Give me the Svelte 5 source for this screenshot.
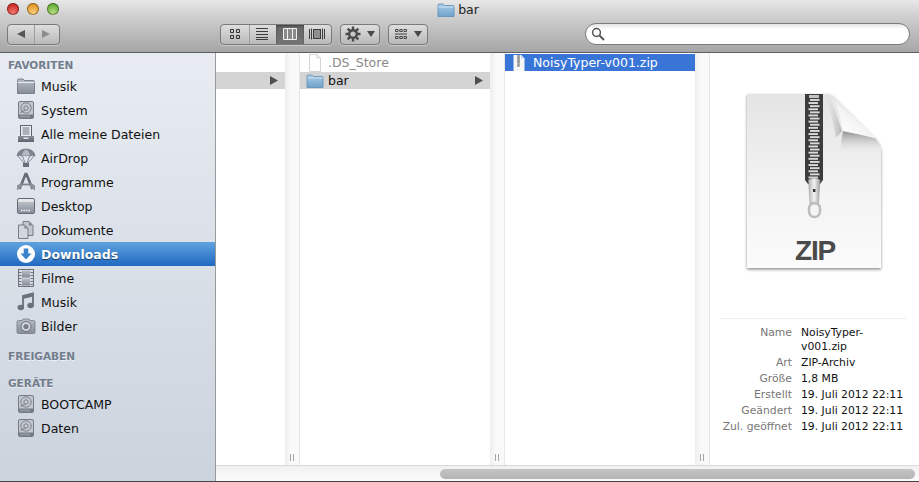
<script>
	const favorites = [
		{ label: 'Musik', icon: 'folder' },
		{ label: 'System', icon: 'disk' },
		{ label: 'Alle meine Dateien', icon: 'allfiles' },
		{ label: 'AirDrop', icon: 'airdrop' },
		{ label: 'Programme', icon: 'apps' },
		{ label: 'Desktop', icon: 'desktop' },
		{ label: 'Dokumente', icon: 'docs' },
		{ label: 'Downloads', icon: 'download', active: true },
		{ label: 'Filme', icon: 'film' },
		{ label: 'Musik', icon: 'note' },
		{ label: 'Bilder', icon: 'camera' }
	];
	const devices = [
		{ label: 'BOOTCAMP', icon: 'disk' },
		{ label: 'Daten', icon: 'disk' }
	];
	const info = [
		['Art', 'ZIP-Archiv'],
		['Größe', '1,8 MB'],
		['Erstellt', '19. Juli 2012 22:11'],
		['Geändert', '19. Juli 2012 22:11'],
		['Zul. geöffnet', '19. Juli 2012 22:11']
	];
	// teeth of the big zipper
	const teeth = Array.from({ length: 26 }, (_, i) => i);
</script>

{#snippet sideIcon(name)}
	<svg class="side-icon" width="20" height="20" viewBox="0 0 20 20">
		{#if name === 'folder'}
			<path d="M1.500 4.500 Q1.500 3 3 3 H7 L8.500 4.500 H17 Q18.500 4.500 18.500 6 V17.500 H1.500 Z" fill="url(#sideGray)" stroke="#67707c" stroke-width=".8" />
			<path d="M1.500 6.500 H18.500" stroke="#e6e9ee" stroke-width="1" />
		{:else if name === 'disk'}
			<rect x="2.500" y="1.500" width="15" height="17" rx="1.500" fill="#c3c8cf" stroke="#757c86" />
			<circle cx="10" cy="8" r="5.200" fill="none" stroke="#7f858e" />
			<circle cx="10" cy="8" r="2.200" fill="none" stroke="#7f858e" />
			<path d="M9 10 L4.500 12.500" stroke="#6b717a" />
			<rect x="3" y="14.500" width="14" height="3.500" fill="#747a84" />
			<path d="M5 15.500 V17.500 M7 15.500 V17.500 M9 15.500 V17.500 M11 15.500 V17.500 M13 15.500 V17.500" stroke="#c9cdd3" stroke-width=".7" />
		{:else if name === 'allfiles'}
			<rect x="4.500" y="1.500" width="11" height="11" fill="#eceef1" stroke="#5e6570" />
			<path d="M6.500 4 H13.500 M6.500 6 H13.500 M6.500 8 H13.500 M6.500 10 H13.500" stroke="#6d747f" />
			<path d="M2 12 H18 V18 H2 Z" fill="url(#sideDark)" />
			<rect x="7.500" y="13.500" width="5" height="1.500" fill="#dfe2e6" />
		{:else if name === 'airdrop'}
			<path d="M1 8 Q2 1 10 1 Q18 1 19 8 Q16.500 6.500 14 8 Q12 6.500 10 8 Q8 6.500 6 8 Q3.500 6.500 1 8 Z" fill="#7d848f" stroke="#6a717c" stroke-width=".7" />
			<path d="M6 7.500 Q6.500 3 10 1.500 Q13.500 3 14 7.500" fill="#b4bac3" />
			<path d="M2 8 L8 15 M18 8 L12 15 M6.500 8 L9 15 M13.500 8 L11 15" stroke="#6a717c" stroke-width=".8" />
			<rect x="7" y="15" width="6" height="4" fill="#666d78" />
		{:else if name === 'apps'}
			<path d="M10 1 L3.500 17 M10 1 L16.500 17" stroke="#646b76" stroke-width="2.600" fill="none" />
			<path d="M1 13.500 L6 10.500 V15 L1 18.500 Z M19 13.500 L14 10.500 V15 L19 18.500 Z" fill="#8d939d" />
			<path d="M5 12.500 H15" stroke="#7c838d" stroke-width="1.800" />
		{:else if name === 'desktop'}
			<rect x="1.500" y="2.500" width="17" height="15" rx="1.500" fill="#e3e5e9" stroke="#636a75" />
			<path d="M2 6 H18 V17 H2 Z" fill="url(#sideGray)" />
			<path d="M5 14.500 H15" stroke="#f4f5f7" stroke-width="1.500" stroke-dasharray="1.500 1" />
		{:else if name === 'docs'}
			<path d="M7 1.500 H13 L17 5.500 V15.500 H7 Z" fill="#c4c8ce" stroke="#6b727d" stroke-width=".9" />
			<path d="M13 1.500 V5.500 H17 Z" fill="#7f858f" />
			<path d="M2.500 5 H8.500 L12 8.500 V18.500 H2.500 Z" fill="#d3d7dc" stroke="#6b727d" stroke-width=".9" />
			<path d="M8.500 5 V8.500 H12 Z" fill="#7f858f" />
		{:else if name === 'download'}
			<circle cx="10" cy="10" r="9" fill="#fff" />
			<path d="M7.700 4.500 H12.300 V9.500 H15.500 L10 15.500 L4.500 9.500 H7.700 Z" fill="#3a83cd" />
		{:else if name === 'film'}
			<rect x="2.500" y="1.500" width="15" height="17" fill="#d9dce1" stroke="#6c737e" />
			<rect x="6" y="2.500" width="8" height="7" fill="url(#sideGray)" />
			<rect x="6" y="10.500" width="8" height="7" fill="url(#sideGray)" />
			<path d="M3 4.500 H5.500 M3 7.500 H5.500 M3 10.500 H5.500 M3 13.500 H5.500 M3 16.500 H5.500 M14.500 4.500 H17 M14.500 7.500 H17 M14.500 10.500 H17 M14.500 13.500 H17 M14.500 16.500 H17" stroke="#6c737e" />
		{:else if name === 'note'}
			<path d="M7 15 V4 L17 1.500 V13" fill="none" stroke="#6a717c" stroke-width="1.800" />
			<path d="M7 4 L17 1.500 V4.500 L7 7 Z" fill="#6a717c" />
			<ellipse cx="4.800" cy="15.500" rx="3.300" ry="2.700" fill="#6a717c" />
			<ellipse cx="14.600" cy="13.500" rx="3.300" ry="2.700" fill="#6a717c" />
		{:else if name === 'camera'}
			<path d="M1 6 Q1 4.500 2.500 4.500 H6 L7 3 H13 L14 4.500 H17.500 Q19 4.500 19 6 V16 Q19 17.500 17.500 17.500 H2.500 Q1 17.500 1 16 Z" fill="url(#sideGray)" stroke="#6a717c" stroke-width=".7" />
			<circle cx="10" cy="10.500" r="5" fill="#d3d7dc" stroke="#666d78" />
			<circle cx="10" cy="10.500" r="2.600" fill="#767d88" />
		{/if}
	</svg>
{/snippet}

{#snippet tinyFolder()}
	<svg class="row-icon" width="18" height="16" viewBox="0 0 18 16">
		<path d="M1 3 Q1 2 2 2 H6 L7.500 3.500 H16 Q17 3.500 17 4.500 V14.500 H1 Z" fill="url(#blueFolder)" stroke="#5f8db5" stroke-width=".8" />
		<path d="M1.500 5 H16.500" stroke="#cfe2f1" />
	</svg>
{/snippet}

<svg class="defs" width="0" height="0">
	<defs>
		<linearGradient id="sideGray" x1="0" y1="0" x2="0" y2="1"><stop offset="0" stop-color="#b9bfc8" /><stop offset="1" stop-color="#868d98" /></linearGradient>
		<linearGradient id="sideDark" x1="0" y1="0" x2="0" y2="1"><stop offset="0" stop-color="#8a909a" /><stop offset="1" stop-color="#5c636e" /></linearGradient>
		<linearGradient id="blueFolder" x1="0" y1="0" x2="0" y2="1"><stop offset="0" stop-color="#a9cbe6" /><stop offset="1" stop-color="#6fa3cd" /></linearGradient>
		<linearGradient id="sheet" x1="0" y1="0" x2="0" y2="1"><stop offset="0" stop-color="#e4e4e4" /><stop offset=".55" stop-color="#f3f3f3" /><stop offset="1" stop-color="#fbfbfb" /></linearGradient>
		<linearGradient id="curl" x1=".2" y1=".95" x2=".75" y2=".25"><stop offset="0" stop-color="#ffffff" /><stop offset=".55" stop-color="#f4f4f4" /><stop offset="1" stop-color="#bdbdbd" /></linearGradient>
		<linearGradient id="curlShade" x1="0" y1="0" x2="0" y2="1"><stop offset="0" stop-color="#8e8e8e" /><stop offset="1" stop-color="#ededed" stop-opacity="0" /></linearGradient>
		<linearGradient id="foldShade" x1="0" y1="0" x2="1" y2="0"><stop offset="0" stop-color="#e4e4e4" stop-opacity="0" /><stop offset="1" stop-color="#b4b4b4" /></linearGradient>
		<linearGradient id="slider" x1="0" y1="0" x2="1" y2="0"><stop offset="0" stop-color="#b4b4b4" /><stop offset=".5" stop-color="#f2f2f2" /><stop offset="1" stop-color="#a0a0a0" /></linearGradient>
	</defs>
</svg>

<div class="window">
	<header class="toolbar">
		<div class="titlebar">
			<div class="lights">
				<span class="light red"></span>
				<span class="light amber"></span>
				<span class="light green"></span>
			</div>
			<div class="title">
				{@render tinyFolder()}
				<span>bar</span>
			</div>
		</div>
		<div class="tools">
			<div class="btn nav">
				<span class="nav-half divided"><svg width="10" height="10" viewBox="0 0 10 10"><path d="M9 1 V9 L1 5 Z" fill="#565656" /></svg></span>
				<span class="nav-half"><svg width="10" height="10" viewBox="0 0 10 10"><path d="M1 1 V9 L9 5 Z" fill="#8c8c8c" /></svg></span>
			</div>
			<div class="btn views">
				<span class="view divided">
					<svg width="14" height="12" viewBox="0 0 14 12"><path d="M2.500 1.500 H5.500 V4.500 H2.500 Z M8.500 1.500 H11.500 V4.500 H8.500 Z M2.500 7.500 H5.500 V10.500 H2.500 Z M8.500 7.500 H11.500 V10.500 H8.500 Z" fill="none" stroke="#333" /></svg>
				</span>
				<span class="view">
					<svg width="14" height="12" viewBox="0 0 14 12"><path d="M1 .5 H13 M1 3.500 H13 M1 6.500 H13 M1 9.500 H13 M1 11.500 H13" stroke="#3c3c3c" /></svg>
				</span>
				<span class="view on">
					<svg width="14" height="12" viewBox="0 0 14 12"><path d="M.5 .5 H13.500 V11.500 H.5 Z M4.500 .5 V11.500 M9.500 .5 V11.500" fill="#8a8a8a" stroke="#f0f0f0" /></svg>
				</span>
				<span class="view">
					<svg width="16" height="12" viewBox="0 0 16 12"><path d="M.5 1 V11 M2.500 .5 V11.500 M13.500 .5 V11.500 M15.500 1 V11" stroke="#3c3c3c" /><rect x="4.500" y="1.500" width="7" height="9" fill="#8f8f8f" stroke="#3c3c3c" /></svg>
				</span>
			</div>
			<div class="btn menu gear">
				<svg width="16" height="16" viewBox="0 0 16 16">
					<circle cx="8" cy="8" r="5" fill="#4a4a4a" />
					<path d="M8 .5 V15.500 M.5 8 H15.500 M2.700 2.700 L13.300 13.300 M13.300 2.700 L2.700 13.300" stroke="#4a4a4a" stroke-width="2.400" />
					<circle cx="8" cy="8" r="2.600" fill="#c8c8c8" />
				</svg>
				<svg width="8" height="6" viewBox="0 0 8 6"><path d="M0 0 H8 L4 6 Z" fill="#4a4a4a" /></svg>
			</div>
			<div class="btn menu arrange">
				<svg width="14" height="12" viewBox="0 0 14 12">
					<path d="M1.500 1.500 H4 V3.500 H1.500 Z M5.750 1.500 H8.250 V3.500 H5.750 Z M10 1.500 H12.500 V3.500 H10 Z M1.500 8.500 H4 V10.500 H1.500 Z M5.750 8.500 H8.250 V10.500 H5.750 Z M10 8.500 H12.500 V10.500 H10 Z" fill="none" stroke="#3c3c3c" stroke-width=".9" />
					<path d="M1 6 H13" stroke="#3c3c3c" />
				</svg>
				<svg width="8" height="6" viewBox="0 0 8 6"><path d="M0 0 H8 L4 6 Z" fill="#4a4a4a" /></svg>
			</div>
			<div class="search">
				<svg width="14" height="14" viewBox="0 0 14 14"><circle cx="5.500" cy="5.500" r="3.900" fill="#fff" stroke="#555" stroke-width="1.500" /><path d="M8.500 8.500 L13 13" stroke="#555" stroke-width="2" /></svg>
			</div>
		</div>
	</header>

	<div class="body">
		<aside class="sidebar">
			<h2 class="first">FAVORITEN</h2>
			{#each favorites as item}
				<div class="side-row" class:active={item.active}>
					{@render sideIcon(item.icon)}
					<span>{item.label}</span>
				</div>
			{/each}
			<h2 class="shared">FREIGABEN</h2>
			<h2 class="devices">GERÄTE</h2>
			{#each devices as item}
				<div class="side-row">
					{@render sideIcon(item.icon)}
					<span>{item.label}</span>
				</div>
			{/each}
		</aside>

		<main class="browser">
			<div class="columns">
				<section class="col narrow">
					<div class="row gap"></div>
					<div class="row open"><svg class="arrow" width="8" height="9" viewBox="0 0 8 9"><path d="M0 0 L8 4.500 L0 9 Z" fill="#4f4f4f" /></svg></div>
				</section>
				<div class="grip"><i></i></div>
				<section class="col">
					<div class="row dim">
						<svg class="row-icon" width="18" height="18" viewBox="0 0 18 18"><path d="M3.500 .5 H11 L14.500 4 V17.500 H3.500 Z" fill="#fff" stroke="#d4d4d4" /><path d="M11 .5 V4 H14.500" fill="#efefef" stroke="#d4d4d4" /></svg>
						<span>.DS_Store</span>
					</div>
					<div class="row open">
						{@render tinyFolder()}
						<span>bar</span>
						<svg class="arrow" width="8" height="9" viewBox="0 0 8 9"><path d="M0 0 L8 4.500 L0 9 Z" fill="#4f4f4f" /></svg>
					</div>
				</section>
				<div class="grip"><i></i></div>
				<section class="col">
					<div class="row picked">
						<svg class="row-icon" width="18" height="18" viewBox="0 0 18 18"><path d="M2.500 1 H10 L13.500 4.500 V17 H2.500 Z" fill="#f6f6f6" /><path d="M10 1 V4.500 H13.500 Z" fill="#c9d6ec" /><path d="M6.500 1 H8.500 V9.500 H6.500 Z" fill="#555" /><path d="M7 2 H8 M7 4 H8 M7 6 H8 M7 8 H8" stroke="#ddd" /><rect x="6.200" y="9.500" width="2.600" height="3.500" rx="1" fill="#9a9a9a" /></svg>
						<span>NoisyTyper-v001.zip</span>
					</div>
				</section>
				<div class="grip"><i></i></div>
				<section class="preview">
					<svg class="zip" width="140" height="182" viewBox="0 0 140 182">
						<defs>
							<filter id="drop" x="-10%" y="-10%" width="120%" height="120%"><feDropShadow dx="0" dy="1.500" stdDeviation="1.500" flood-color="#000" flood-opacity=".45" /></filter>
						</defs>
						<path d="M3 2 H82 Q86 2 89 4 L131 46 Q137 52 137 60 V176 H3 Z" fill="url(#sheet)" filter="url(#drop)" />
						<path d="M80 2.500 H84 Q92 20 98 39 L92 46 Q88 22 80 2.500 Z" fill="url(#foldShade)" />
						<path d="M99 39 Q115 42 131 46 Q137 52 137 60 Q120 64 96 58 Z" fill="url(#curlShade)" />
						<path d="M89 4 Q96 20 99 39 Q115 42 131 46 Z" fill="url(#curl)" />
						<path d="M61 2 H79 V88 L76 92 H64 L61 88 Z" fill="#3c3c3c" />
						<rect x="65" y="3" width="10" height="3" fill="#c4c4c4" />
						{#each teeth as t}
							<rect x={t % 2 ? 64.500 : 66} y={7 + t * 3.100} width="9.500" height="1.900" fill="#dadada" />
						{/each}
						<path d="M64.500 88 Q70 84 76 88 L74.500 112 H66 Z" fill="url(#slider)" stroke="#9a9a9a" stroke-width=".5" />
						<rect x="69" y="97" width="2.400" height="3" fill="#333" />
						<rect x="65" y="111" width="11" height="14" rx="5.500" fill="none" stroke="#bdbdbd" stroke-width="2.500" />
						<text x="71" y="168" class="zip-label" text-anchor="middle">ZIP</text>
					</svg>
					<hr />
					<div class="info">
						<span class="key">Name</span>
						<span class="val name">NoisyTyper-<br />v001.zip</span>
						{#each info as [k, v]}
							<span class="key">{k}</span>
							<span class="val">{v}</span>
						{/each}
					</div>
				</section>
			</div>
			<div class="hscroll"><div class="thumb"></div></div>
		</main>
	</div>
</div>

<style>
	:global(body) {
		margin: 0;
		background: #fff;
	}

	.defs {
		display: block;
	}

	.window {
		width: 919px;
		height: 482px;
		display: flex;
		flex-direction: column;
		overflow: hidden;
		font-family: 'DejaVu Sans', sans-serif;
		font-size: 12px;
		color: #111;
		border-bottom: 1px solid #444;
		box-sizing: border-box;
	}

	.toolbar {
		height: 53px;
		flex: none;
		box-sizing: border-box;
		background: linear-gradient(#e8e8e8, #d0d0d0 30%, #a6a6a6);
		border-bottom: 1px solid #5f5f5f;
		display: flex;
		flex-direction: column;
	}

	.titlebar {
		height: 22px;
		position: relative;
		display: flex;
		justify-content: center;
		align-items: center;
	}

	.lights {
		position: absolute;
		left: 7px;
		top: 3px;
		display: flex;
		gap: 8px;
	}

	.light {
		width: 12px;
		height: 12px;
		border-radius: 50%;
		box-shadow: inset 0 0 0 1px rgba(0, 0, 0, 0.35);
	}

	.red {
		background: radial-gradient(circle at 50% 80%, #f07a72, #d0322c 65%, #a8231f);
	}

	.amber {
		background: radial-gradient(circle at 50% 80%, #f8cf7e, #e39a2e 65%, #b87a20);
	}

	.green {
		background: radial-gradient(circle at 50% 80%, #b7de82, #6eb13f 65%, #4e8b2c);
	}

	.title {
		display: flex;
		align-items: center;
		gap: 3px;
		font-size: 12.500px;
		color: #222;
		margin-top: -3px;
		margin-left: -3px;
	}

	.tools {
		display: flex;
		align-items: center;
		padding: 1px 9px 0 7px;
		height: 22px;
	}

	.btn {
		height: 21px;
		box-sizing: border-box;
		border: 1px solid #7a7a7a;
		border-radius: 4px;
		background: linear-gradient(#dedede, #b9b9b9);
		box-shadow: 0 1px 0 rgba(255, 255, 255, 0.35);
		display: flex;
		align-items: center;
		overflow: hidden;
	}

	.nav {
		width: 53px;
	}

	.nav-half {
		flex: 1;
		height: 100%;
		display: flex;
		align-items: center;
		justify-content: center;
	}

	.divided {
		box-shadow: 1px 0 0 #9d9d9d;
	}

	.views {
		width: 112px;
		margin-left: 160px;
	}

	.view {
		flex: 1;
		height: 100%;
		display: flex;
		align-items: center;
		justify-content: center;
	}

	.view.on {
		background: linear-gradient(#666, #747474);
		box-shadow: inset 0 1px 2px rgba(0, 0, 0, 0.4);
	}

	.menu {
		justify-content: center;
		gap: 6px;
		width: 40px;
	}

	.gear {
		margin-left: 8px;
	}

	.arrange {
		margin-left: 8px;
	}

	.search {
		margin-left: auto;
		width: 325px;
		height: 22px;
		box-sizing: border-box;
		border: 1px solid #7c7c7c;
		border-radius: 11px;
		background: linear-gradient(#e4e4e4, #fff 25%);
		display: flex;
		align-items: center;
		padding-left: 5px;
	}

	.body {
		flex: 1;
		display: flex;
		min-height: 0;
	}

	.sidebar {
		width: 216px;
		flex: none;
		box-sizing: border-box;
		border-right: 1px solid #9a9a9a;
		background: linear-gradient(#e8ecf2, #cbd3dd);
	}

	h2 {
		margin: 0;
		padding-left: 8px;
		font-size: 10.500px;
		line-height: 18px;
		font-weight: bold;
		color: #717c8c;
		text-shadow: 0 1px 0 rgba(255, 255, 255, 0.6);
	}

	.first {
		padding-top: 3px;
	}

	.shared {
		margin-top: 9px;
	}

	.devices {
		margin-top: 9px;
	}

	.side-row {
		height: 24px;
		display: flex;
		align-items: center;
		padding-left: 16px;
		gap: 5px;
		font-size: 12.500px;
	}

	.side-icon {
		flex: none;
	}

	.side-row.active {
		background: linear-gradient(#5fa4df, #2069c2);
		color: #fff;
		font-weight: bold;
		text-shadow: 0 1px 1px rgba(0, 0, 0, 0.5);
	}

	.browser {
		flex: 1;
		min-width: 0;
		display: flex;
		flex-direction: column;
		background: #fff;
	}

	.columns {
		flex: 1;
		display: flex;
		min-height: 0;
	}

	.col {
		width: 190px;
		flex: none;
		padding-top: 1px;
		display: flex;
		flex-direction: column;
		gap: 1px;
	}

	.col.narrow {
		width: 69px;
	}

	.grip {
		width: 15px;
		flex: none;
		box-sizing: border-box;
		background: linear-gradient(90deg, #eeeeee, #f9f9f9 40%, #f9f9f9);
		border-right: 1px solid #e6e6e6;
		display: flex;
		align-items: flex-end;
		justify-content: center;
		padding-bottom: 4px;
	}

	.grip i {
		width: 4px;
		height: 7px;
		box-sizing: border-box;
		border-left: 1px solid #a5a5a5;
		border-right: 1px solid #a5a5a5;
	}

	.row {
		height: 17px;
		display: flex;
		align-items: center;
		padding-left: 6px;
		gap: 4px;
		font-size: 12.500px;
		white-space: nowrap;
	}

	.row.open {
		background: #d4d4d4;
		padding-right: 7px;
	}

	.row .arrow {
		margin-left: auto;
	}

	.row.dim {
		color: #8a8a8a;
	}

	.row.picked {
		background: #3875d7;
		color: #fff;
	}

	.row-icon {
		flex: none;
	}

	.preview {
		flex: 1;
		min-width: 0;
		display: flex;
		flex-direction: column;
		align-items: center;
		padding-top: 39px;
	}

	.zip {
		margin-left: -1px;
		flex: none;
	}

	.zip-label {
		font-family: 'Liberation Sans', sans-serif;
		font-weight: bold;
		font-size: 28px;
		letter-spacing: -1.200px;
		fill: #4a4a4a;
	}

	hr {
		width: 186px;
		border: 0;
		border-top: 1px solid #efefef;
		margin: 44px 0 0 -4px;
		flex: none;
	}

	.info {
		align-self: stretch;
		display: grid;
		grid-template-columns: 82px auto;
		column-gap: 9px;
		font-size: 10.800px;
		line-height: 16px;
		margin-top: 6px;
	}

	.key {
		text-align: right;
		color: #777;
		white-space: nowrap;
	}

	.val {
		white-space: nowrap;
	}

	.val.name {
		line-height: 14px;
		padding: 1px 0;
	}

	.hscroll {
		height: 16px;
		flex: none;
		box-sizing: border-box;
		border-top: 1px solid #d8d8d8;
		background: linear-gradient(#f1f1f1, #fbfbfb);
		padding: 3px 4px 2px 224px;
	}

	.thumb {
		height: 10px;
		border-radius: 5px;
		background: linear-gradient(#c4c4c4, #b4b4b4);
	}
</style>
